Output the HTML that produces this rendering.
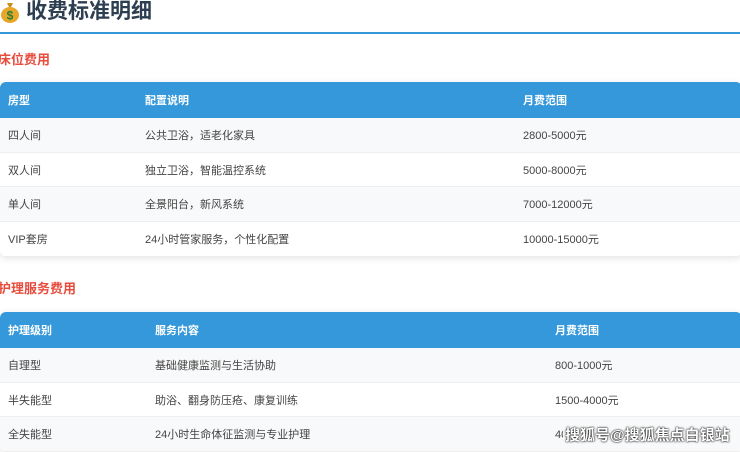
<!DOCTYPE html>
<html><head><meta charset="utf-8"><style>
*{margin:0;padding:0;box-sizing:border-box}
body{width:740px;height:450px;overflow:hidden;background:#fff;font-family:"Liberation Sans","Noto Sans CJK SC",sans-serif;position:relative}
.title{position:absolute;left:0;top:0;height:34px;width:740px;border-bottom:2px solid #3498db;font-size:21px;font-weight:bold;color:#2c3e50;line-height:24px}
.title span{position:absolute;left:26px;top:0}
.h{position:absolute;left:0;font-size:13px;font-weight:bold;color:#e74c3c}
.t{position:absolute;left:0;width:742px;border-radius:6px;overflow:hidden;box-shadow:0 2px 8px rgba(0,0,0,.12);background:#fff}
.r{height:34.5px;position:relative;border-bottom:1px solid #eee;font-size:11px;color:#444;line-height:37px}
.r:nth-child(odd){background:#fff}
.r:nth-child(even){background:#f8f9fa}
.r.hd{background:#3498db;height:36px;color:#fff;font-weight:bold;line-height:39px;border:none}
.r div{position:absolute;top:0}
</style></head><body>
<div class="title">
<svg style="position:absolute;left:0;top:1px" width="20" height="22" viewBox="0 0 20 22"><path d="M7 2 L13 2 L11 6 L9 6 Z" fill="#c8901a"/><ellipse cx="10" cy="14" rx="9" ry="8" fill="#e6a72a"/><text x="10" y="18.5" font-size="12" font-weight="bold" text-anchor="middle" fill="#2e7d32" font-family="Liberation Sans">$</text></svg>
<span>收费标准明细</span></div>
<div class="h" style="top:49px;left:-2px">床位费用</div>
<div class="t" style="top:82px">
<div class="r hd"><div style="left:8px">房型</div><div style="left:145px">配置说明</div><div style="left:523px">月费范围</div></div>
<div class="r"><div style="left:8px">四人间</div><div style="left:145px">公共卫浴，适老化家具</div><div style="left:523px">2800-5000元</div></div>
<div class="r"><div style="left:8px">双人间</div><div style="left:145px">独立卫浴，智能温控系统</div><div style="left:523px">5000-8000元</div></div>
<div class="r"><div style="left:8px">单人间</div><div style="left:145px">全景阳台，新风系统</div><div style="left:523px">7000-12000元</div></div>
<div class="r" style="border:none"><div style="left:8px">VIP套房</div><div style="left:145px">24小时管家服务，个性化配置</div><div style="left:523px">10000-15000元</div></div>
</div>
<div class="h" style="top:278px;left:-2px">护理服务费用</div>
<div class="t" style="top:312px">
<div class="r hd"><div style="left:8px">护理级别</div><div style="left:155px">服务内容</div><div style="left:555px">月费范围</div></div>
<div class="r"><div style="left:8px">自理型</div><div style="left:155px">基础健康监测与生活协助</div><div style="left:555px">800-1000元</div></div>
<div class="r"><div style="left:8px">半失能型</div><div style="left:155px">助浴、翻身防压疮、康复训练</div><div style="left:555px">1500-4000元</div></div>
<div class="r"><div style="left:8px">全失能型</div><div style="left:155px">24小时生命体征监测与专业护理</div><div style="left:555px">4000-8000元</div></div>
</div>
<div style="position:absolute;left:563px;top:424px;font-size:15px;color:#fff;font-weight:bold;text-shadow:0 0 2px #000,0 0 1px #000;background:#f8f9fa;padding-left:2px">搜狐号@搜狐焦点白银站</div>
</body></html>
